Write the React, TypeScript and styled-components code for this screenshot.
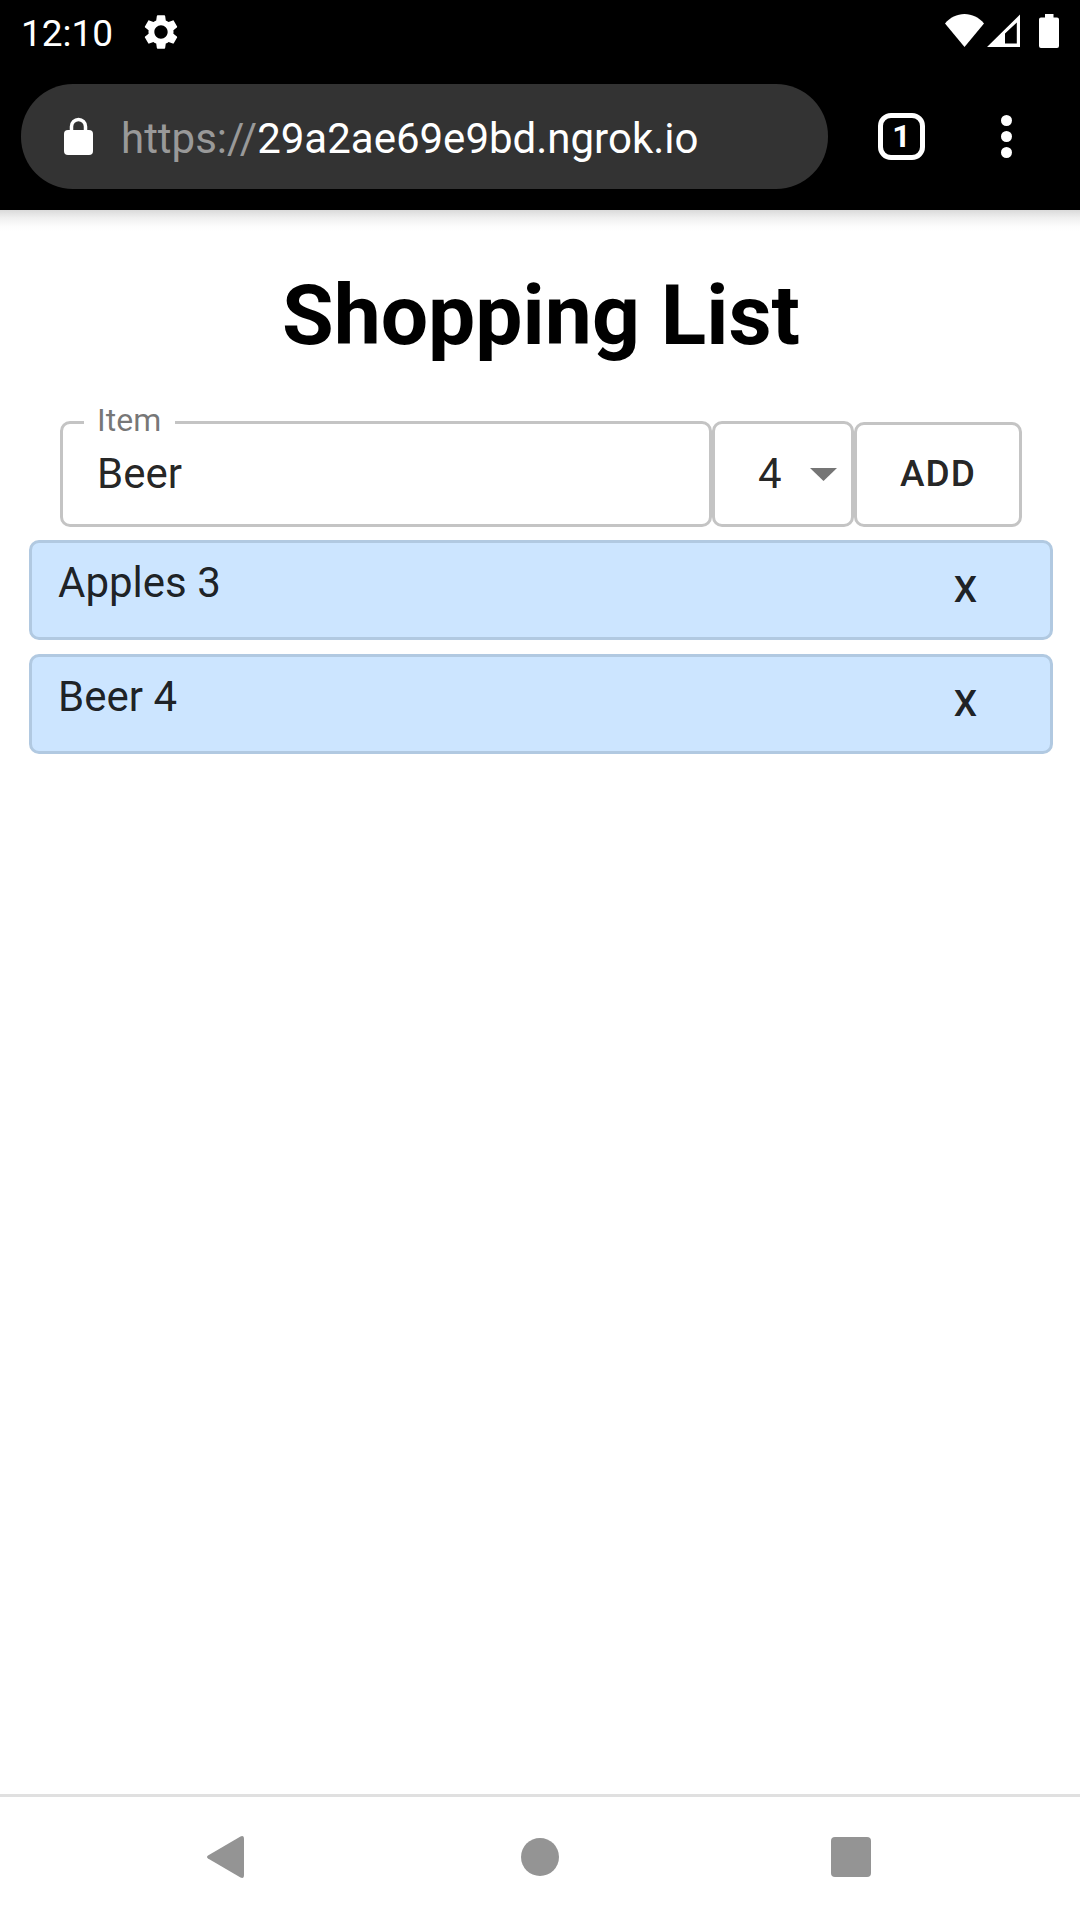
import React, { useState } from "react";
import styled, { createGlobalStyle } from "styled-components";

const GlobalStyle = createGlobalStyle`
  *, *::before, *::after { box-sizing: border-box; }
  body {
    margin: 0;
    background: #fff;
    color: rgba(0, 0, 0, 0.87);
    font-family: Roboto, "Liberation Sans", sans-serif;
    font-size: 42px;
  }
  button, input, select { font-family: inherit; color: inherit; margin: 0; }
`;

const Screen = styled.div`
  display: flex;
  flex-direction: column;
  min-height: 100vh;
`;

const StatusBar = styled.div`
  display: flex;
  align-items: center;
  height: 63px;
  padding: 0 21px;
  background: #000;
  color: #fff;
`;

const Clock = styled.time`
  padding-top: 4px;
  font-size: 37px;
  line-height: 44px;
`;

const StatusIcons = styled.div<{ $end?: boolean }>`
  display: flex;
  align-items: center;
  margin-left: ${(p) => (p.$end ? "auto" : "28px")};
`;

const Icon = styled.svg`
  display: block;
  flex: none;
`;

const Toolbar = styled.header`
  display: flex;
  align-items: center;
  height: 147px;
  padding: 0 21px;
  background: #000;
  color: #fff;
`;

const AddressBar = styled.div`
  display: flex;
  flex: 1;
  align-items: center;
  min-width: 0;
  height: 105px;
  padding: 0 42px;
  border-radius: 52px;
  background: #333;
`;

const Address = styled.a`
  margin-left: 26px;
  padding-top: 4px;
  color: #fff;
  line-height: 50px;
  text-decoration: none;
  white-space: nowrap;
`;

const Scheme = styled.span`
  color: #999;
`;

const ToolbarButton = styled.button`
  display: flex;
  align-items: center;
  justify-content: center;
  width: 105px;
  height: 105px;
  padding: 0;
  border: 0;
  background: none;
`;

const ToolbarActions = styled.div`
  display: flex;
  margin-left: 21px;
`;

const TabCount = styled.span`
  display: flex;
  align-items: center;
  justify-content: center;
  width: 47px;
  height: 47px;
  border: 5px solid #fff;
  border-radius: 13px;
  color: #fff;
  font-size: 32px;
  font-weight: 700;
  line-height: 37px;
`;

const Page = styled.main`
  flex: 1;
  padding: 57px 27px 0 29px;
  background: linear-gradient(#dadada, #f0f0f0 8px, #fcfcfc 16px, #fff 22px) top / 100% 22px no-repeat;
`;

const Title = styled.h1`
  margin: 0 0 39px;
  color: #000;
  font-size: 84px;
  font-weight: 700;
  line-height: 98px;
  text-align: center;
`;

const AddForm = styled.form`
  display: flex;
  align-items: flex-end;
  padding: 0 31px;
`;

const Field = styled.fieldset`
  flex: 1;
  min-width: 0;
  margin: 0;
  padding: 0 0 19px;
  border: 3px solid #c4c4c4;
  border-radius: 10px;
`;

const FieldLegend = styled.legend`
  margin-left: 21px;
  padding: 0 14px 4px 13px;
  color: rgba(0, 0, 0, 0.54);
  font-size: 32px;
  line-height: 33px;
`;

const TextInput = styled.input`
  display: block;
  width: 100%;
  height: 64px;
  padding: 0 34px;
  border: 0;
  outline: 0;
  background: none;
  font-size: 42px;
`;

const SelectBox = styled.div`
  display: grid;
  align-items: center;
  width: 142px;
  height: 106px;
  border: 3px solid #c4c4c4;
  border-radius: 10px;
  > * { grid-area: 1 / 1; }
`;

const QuantitySelect = styled.select`
  width: 100%;
  height: 100px;
  padding: 0 0 2px 43px;
  appearance: none;
  border: 0;
  outline: 0;
  background: none;
  font-size: 42px;
`;

const Arrow = styled(Icon)`
  justify-self: end;
  margin-right: 14px;
  pointer-events: none;
`;

const TextButton = styled.button<{ $outlined?: boolean }>`
  width: 168px;
  height: ${(p) => (p.$outlined ? "105px" : "94px")};
  padding: 0 0 2px;
  border: ${(p) => (p.$outlined ? "3px solid #c4c4c4" : "0")};
  border-radius: 10px;
  background: none;
  font-size: 37px;
  font-weight: 500;
  letter-spacing: 1px;
`;

const Items = styled.ul`
  display: flex;
  flex-direction: column;
  gap: 14px;
  margin: 13px 0 0;
  padding: 0;
  list-style: none;
`;

const Item = styled.li`
  display: flex;
  justify-content: space-between;
  border: 3px solid #b1c9e1;
  border-radius: 10px;
  background: #cce5ff;
`;

const ItemText = styled.span`
  padding: 8px 0 0 26px;
  line-height: 63px;
`;

const NavBar = styled.nav`
  display: grid;
  grid-template-columns: repeat(3, 1fr);
  height: 126px;
  padding: 0 72px 3px;
  border-top: 3px solid #e0e0e0;
`;

const NavButton = styled.button`
  display: flex;
  align-items: center;
  justify-content: center;
  padding: 0;
  border: 0;
  background: none;
`;

type Entry = { name: string; quantity: number };

export default function App() {
  const [name, setName] = useState("Beer");
  const [quantity, setQuantity] = useState(4);
  const [entries, setEntries] = useState<Entry[]>([
    { name: "Apples", quantity: 3 },
    { name: "Beer", quantity: 4 },
  ]);

  const add = (event: React.FormEvent) => {
    event.preventDefault();
    if (name.trim()) setEntries([...entries, { name, quantity }]);
  };

  return (
    <Screen>
      <GlobalStyle />
      <StatusBar>
        <Clock>12:10</Clock>
        <StatusIcons>
          <Icon width="40" height="40" viewBox="0 0 24 24" fill="#fff">
            <path d="M19.43 12.98c.04-.32.07-.64.07-.98s-.03-.66-.07-.98l2.11-1.65c.19-.15.24-.42.12-.64l-2-3.46c-.12-.22-.39-.3-.61-.22l-2.49 1c-.52-.4-1.08-.73-1.69-.98l-.38-2.65C14.46 2.18 14.25 2 14 2h-4c-.25 0-.46.18-.49.42l-.38 2.65c-.61.25-1.17.59-1.69.98l-2.49-1c-.23-.09-.49 0-.61.22l-2 3.46c-.13.22-.07.49.12.64l2.11 1.65c-.04.32-.07.65-.07.98s.03.66.07.98l-2.11 1.65c-.19.15-.24.42-.12.64l2 3.46c.12.22.39.3.61.22l2.49-1c.52.4 1.08.73 1.69.98l.38 2.65c.03.24.24.42.49.42h4c.25 0 .46-.18.49-.42l.38-2.65c.61-.25 1.17-.59 1.69-.98l2.49 1c.23.09.49 0 .61-.22l2-3.46c.12-.22.07-.49-.12-.64l-2.11-1.65zM12 16c-2.200 0-4-1.800-4-4s1.800-4 4-4 4 1.800 4 4-1.800 4-4 4z" />
          </Icon>
        </StatusIcons>
        <StatusIcons $end>
          <Icon width="114" height="35" viewBox="0 0 114 35" fill="#fff">
            <path d="M0 9.500C5 3.500 12 0 19.500 0S34 3.500 39 9.500L19.500 33z" />
            <path fillRule="evenodd" d="M42 33 75 .5V33zM60 19.500V29.500H71.800V8.500z" />
            <path d="M100 0h8.500v3.500h3.500a2 2 0 0 1 2 2V32a2 2 0 0 1-2 2H96a2 2 0 0 1-2-2V5.500a2 2 0 0 1 2-2h4z" />
          </Icon>
        </StatusIcons>
      </StatusBar>

      <Toolbar>
        <AddressBar>
          <Icon width="32" height="40" viewBox="0 0 32 40">
            <rect x="1" y="13" width="29" height="25" rx="4" fill="#fff" />
            <path d="M8.500 14V9.500a7 7 0 0 1 14 0V14" fill="none" stroke="#fff" strokeWidth="3.500" />
          </Icon>
          <Address href="https://29a2ae69e9bd.ngrok.io">
            <Scheme>https://</Scheme>29a2ae69e9bd.ngrok.io
          </Address>
        </AddressBar>
        <ToolbarActions>
          <ToolbarButton aria-label="Open tabs">
            <TabCount>1</TabCount>
          </ToolbarButton>
          <ToolbarButton aria-label="Menu">
            <Icon width="12" height="44" viewBox="0 0 12 44" fill="#fff">
              <circle cx="5.500" cy="5.500" r="5.500" />
              <circle cx="5.500" cy="21.500" r="5.500" />
              <circle cx="5.500" cy="37.500" r="5.500" />
            </Icon>
          </ToolbarButton>
        </ToolbarActions>
      </Toolbar>

      <Page>
        <Title>Shopping List</Title>
        <AddForm onSubmit={add}>
          <Field>
            <FieldLegend>
              <label htmlFor="item">Item</label>
            </FieldLegend>
            <TextInput id="item" value={name} onChange={(e) => setName(e.target.value)} />
          </Field>
          <SelectBox>
            <QuantitySelect
              aria-label="Quantity"
              value={quantity}
              onChange={(e) => setQuantity(Number(e.target.value))}
            >
              {[1, 2, 3, 4, 5, 6, 7, 8, 9].map((n) => (
                <option key={n}>{n}</option>
              ))}
            </QuantitySelect>
            <Arrow width="27" height="13" viewBox="0 0 27 13" fill="#757575">
              <path d="M0 0h27L13.500 13z" />
            </Arrow>
          </SelectBox>
          <TextButton $outlined type="submit">ADD</TextButton>
        </AddForm>
        <Items>
          {entries.map((entry, index) => (
            <Item key={index}>
              <ItemText>
                {entry.name} {entry.quantity}
              </ItemText>
              <TextButton
                type="button"
                aria-label={`Remove ${entry.name}`}
                onClick={() => setEntries(entries.filter((_, i) => i !== index))}
              >
                X
              </TextButton>
            </Item>
          ))}
        </Items>
      </Page>

      <NavBar>
        <NavButton aria-label="Back">
          <Icon width="42" height="42" viewBox="0 0 42 42" fill="#949494">
            <path d="M1 19.500 33.500.500Q37 -1 37 3V39Q37 43 33.500 41.500L1 22.500Q-1 21 1 19.500z" />
          </Icon>
        </NavButton>
        <NavButton aria-label="Home">
          <Icon width="42" height="42" viewBox="0 0 42 42" fill="#949494">
            <circle cx="21" cy="21" r="19" />
          </Icon>
        </NavButton>
        <NavButton aria-label="Recent apps">
          <Icon width="42" height="42" viewBox="0 0 42 42" fill="#949494">
            <rect x="0" y="1" width="40" height="40" rx="4" />
          </Icon>
        </NavButton>
      </NavBar>
    </Screen>
  );
}
